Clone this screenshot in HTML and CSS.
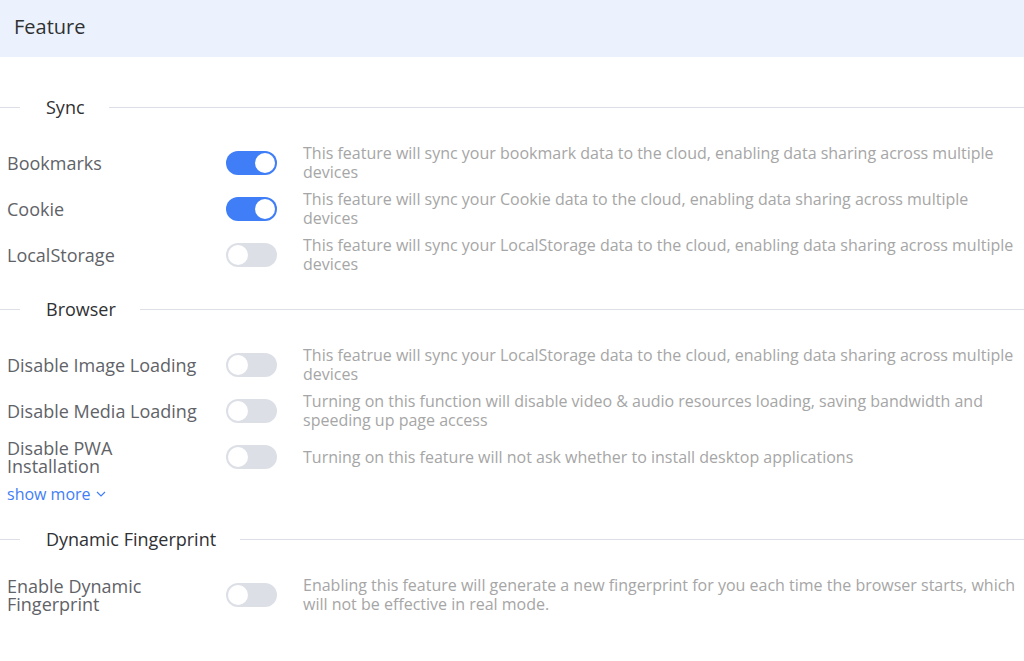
FILE: index.html
```html
<!DOCTYPE html>
<html lang="en">
<head>
    <meta charset="UTF-8">
    <meta name="viewport" content="width=device-width, initial-scale=1.0">
    <title>Feature</title>
    <link rel="stylesheet" href="styles.css">
</head>
<body>
    <div class="page-header">Feature</div>

    <div class="content">
        <div class="divider"><span>Sync</span></div>

        <div class="setting-row">
            <div class="label">Bookmarks</div>
            <div class="switch on"><span></span></div>
            <div class="desc">This feature will sync your bookmark data to the cloud, enabling data sharing across multiple devices</div>
        </div>
        <div class="setting-row">
            <div class="label">Cookie</div>
            <div class="switch on"><span></span></div>
            <div class="desc">This feature will sync your Cookie data to the cloud, enabling data sharing across multiple devices</div>
        </div>
        <div class="setting-row">
            <div class="label">LocalStorage</div>
            <div class="switch"><span></span></div>
            <div class="desc">This feature will sync your LocalStorage data to the cloud, enabling data sharing across multiple devices</div>
        </div>

        <div class="divider"><span>Browser</span></div>

        <div class="setting-row">
            <div class="label">Disable Image Loading</div>
            <div class="switch"><span></span></div>
            <div class="desc">This featrue will sync your LocalStorage data to the cloud, enabling data sharing across multiple devices</div>
        </div>
        <div class="setting-row">
            <div class="label">Disable Media Loading</div>
            <div class="switch"><span></span></div>
            <div class="desc">Turning on this function will disable video &amp; audio resources loading, saving bandwidth and speeding up page access</div>
        </div>
        <div class="setting-row">
            <div class="label">Disable PWA Installation</div>
            <div class="switch"><span></span></div>
            <div class="desc">Turning on this feature will not ask whether to install desktop applications</div>
        </div>
        <a class="show-more" href="#">show more
            <svg width="12" height="12" viewBox="0 0 12 12"><polyline points="2,4 6,8 10,4" fill="none" stroke="currentColor" stroke-width="1.2"/></svg>
        </a>

        <div class="divider"><span>Dynamic Fingerprint</span></div>

        <div class="setting-row">
            <div class="label">Enable Dynamic Fingerprint</div>
            <div class="switch"><span></span></div>
            <div class="desc">Enabling this feature will generate a new fingerprint for you each time the browser starts, which will not be effective in real mode.</div>
        </div>
    </div>
</body>
</html>
```

FILE: styles.css
```css
* {
    margin: 0;
    padding: 0;
    box-sizing: border-box;
}

body {
    background: #fff;
    font-family: 'Open Sans', 'Noto Sans', sans-serif;
    color: #303133;
}

.page-header {
    height: 57px;
    background: #ebf1fd;
    padding-left: 14px;
    font-size: 20px;
    line-height: 53px;
    color: #303133;
}

.content {
    padding-top: 15px;
}

.divider {
    display: flex;
    align-items: center;
    height: 26px;
    margin: 22px 0 24px;
    font-size: 18px;
    color: #303133;
}

    .divider::before,
    .divider::after {
        content: "";
        height: 1px;
        background: #dcdfe6;
    }

    .divider::before {
        width: 20px;
    }

    .divider::after {
        flex: 1;
    }

    .divider span {
        padding: 0 24px 0 26px;
    }

.setting-row {
    display: flex;
    align-items: center;
    min-height: 38px;
    margin-bottom: 8px;
    padding-left: 7px;
}

.label {
    width: 219px;
    flex-shrink: 0;
    padding-right: 21px;
    font-size: 18px;
    line-height: 18px;
    color: #5f6368;
}

.switch {
    position: relative;
    width: 51px;
    height: 24px;
    flex-shrink: 0;
    border-radius: 12px;
    background: #dcdfe6;
    margin-right: 26px;
}

    .switch span {
        position: absolute;
        top: 2px;
        left: 2px;
        width: 20px;
        height: 20px;
        border-radius: 50%;
        background: #fff;
    }

    .switch.on {
        background: #3f7ef6;
    }

        .switch.on span {
            left: 29px;
        }

.desc {
    width: 720px;
    font-size: 16px;
    line-height: 19px;
    color: #a6a6a6;
}

.show-more {
    display: flex;
    align-items: center;
    width: fit-content;
    height: 20px;
    gap: 4px;
    margin-left: 7px;
    font-size: 16px;
    color: #3f7ef6;
    text-decoration: none;
}
```
